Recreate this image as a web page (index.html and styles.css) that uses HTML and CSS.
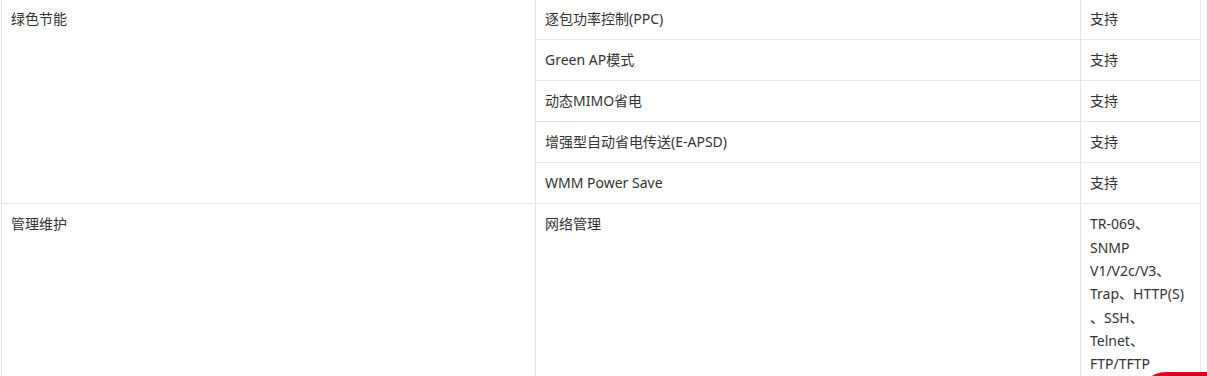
FILE: index.html
```html
<!DOCTYPE html>
<html lang="zh-CN">
<head>
<meta charset="utf-8">
<link rel="stylesheet" href="styles.css">
</head>
<body>
<div class="page">
  <table class="spec">
    <colgroup>
      <col class="c1">
      <col class="c2">
      <col class="c3">
    </colgroup>
    <tbody>
      <tr>
        <td rowspan="5">绿色节能</td>
        <td>逐包功率控制(PPC)</td>
        <td>支持</td>
      </tr>
      <tr>
        <td>Green AP模式</td>
        <td>支持</td>
      </tr>
      <tr>
        <td>动态MIMO省电</td>
        <td>支持</td>
      </tr>
      <tr>
        <td>增强型自动省电传送(E-APSD)</td>
        <td>支持</td>
      </tr>
      <tr>
        <td>WMM Power Save</td>
        <td>支持</td>
      </tr>
      <tr>
        <td>管理维护</td>
        <td>网络管理</td>
        <td>TR-069、<br>SNMP<br>V1/V2c/V3、<br>Trap、HTTP(S)<br>、SSH、<br>Telnet、<br>FTP/TFTP<br>、Syslog</td>
      </tr>
    </tbody>
  </table>
</div>
<div class="float-btn"></div>
</body>
</html>
```

FILE: styles.css
```css
html, body {
  margin: 0;
  padding: 0;
  background: #ffffff;
  overflow: hidden;
}

.page {
  margin-top: -2px;
  margin-left: 1px;
}

.spec {
  border-collapse: collapse;
  table-layout: fixed;
  width: 1200px;
  font-family: "Noto Sans", "Noto Sans CJK SC", sans-serif;
  font-size: 14px;
  color: #333333;
}

.c1 { width: 534px; }
.c2 { width: 545px; }
.c3 { width: 120px; }

.spec td {
  border: 1px solid #e5e5e5;
  padding: 8.33px 9px;
  line-height: 23.33px;
  vertical-align: top;
  text-align: left;
}

.float-btn {
  position: fixed;
  left: 1139px;
  top: 372px;
  width: 120px;
  height: 54px;
  border-radius: 27px;
  background: #d8001a;
}
```
